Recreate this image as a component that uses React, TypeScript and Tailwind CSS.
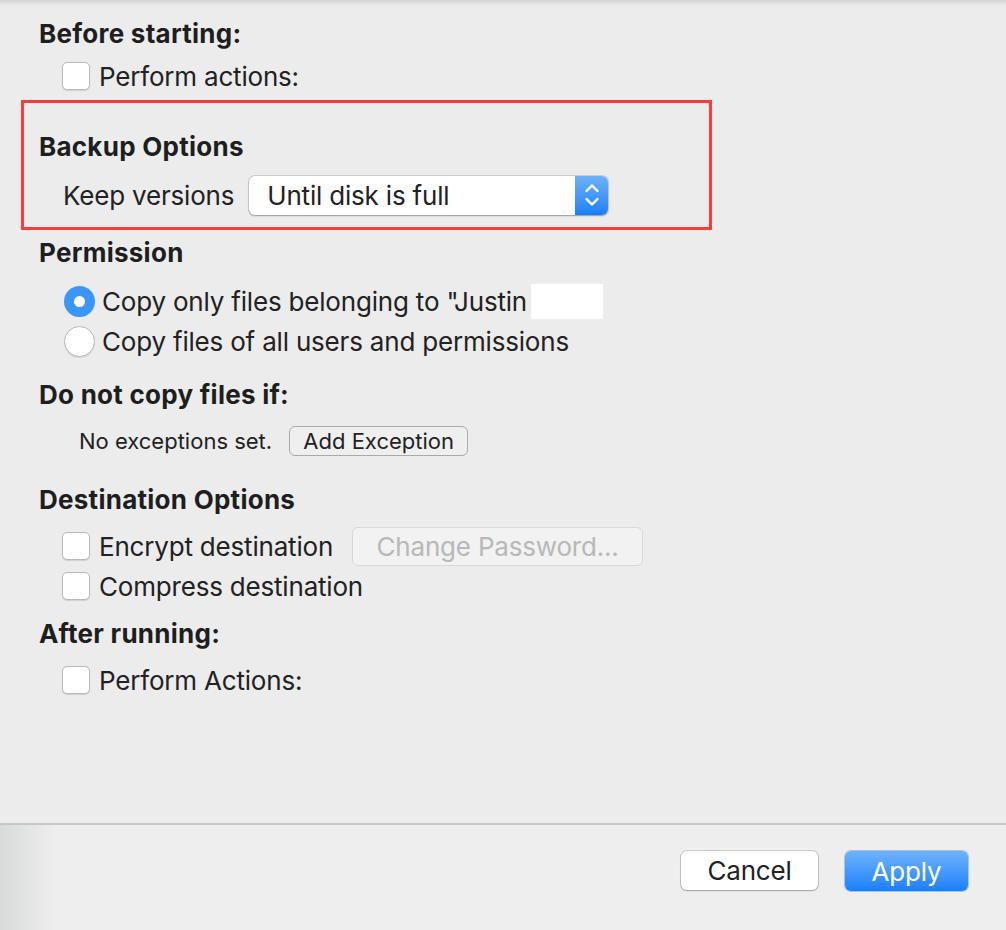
import React from 'react';

function Checkbox() {
  return (
    <span className="inline-block h-[28px] w-[28px] shrink-0 rounded-[5px] border border-[#b9b9b9] bg-white shadow-[0_1px_1px_rgba(0,0,0,0.12)]" />
  );
}

function Radio({ checked }: { checked?: boolean }) {
  if (checked) {
    return (
      <span className="flex h-[31px] w-[31px] shrink-0 items-center justify-center rounded-full bg-[#3a97f9]">
        <span className="h-[11px] w-[11px] rounded-full bg-white" />
      </span>
    );
  }
  return (
    <span className="inline-block h-[31px] w-[31px] shrink-0 rounded-full border border-[#b9b9b9] bg-white shadow-[0_1px_1px_rgba(0,0,0,0.1)]" />
  );
}

function Heading({ children, className = '' }: { children: React.ReactNode; className?: string }) {
  return (
    <div className={`flex items-center pl-[39px] text-[26px] font-bold tracking-[0.01em] text-[#1e1e1e] ${className}`}>
      {children}
    </div>
  );
}

export default function App() {
  return (
    <div className="flex h-[930px] w-[1006px] flex-col bg-[#ececec] tracking-[-0.012em] text-[#222] [font-family:Inter,'Noto_Sans',sans-serif]">
      {/* top shade */}
      <div className="h-[6px] bg-gradient-to-b from-[#d4d4d4] to-[#ececec]" />

      <Heading className="h-[54px]">Before starting:</Heading>
      <div className="flex h-[32px] items-center gap-[9px] pl-[62px] text-[26px]">
        <Checkbox />
        <span>Perform actions:</span>
      </div>

      {/* highlighted backup options */}
      <div className="ml-[21px] mt-[8px] w-[691px] border-[3px] border-[#fd3b38] pb-[12px] pt-[22px]">
        <div className="flex h-[42px] items-center pl-[15px] text-[26px] font-bold tracking-[0.01em] text-[#1e1e1e]">Backup Options</div>
        <div className="mt-[8px] flex h-[40px] items-center pl-[39px] text-[26px]">
          <span>Keep versions</span>
          <div className="ml-[15px] flex h-[39px] w-[359px] items-stretch overflow-hidden rounded-[6px] bg-white shadow-[0_0_0_1px_rgba(0,0,0,0.12),0_1px_2px_rgba(0,0,0,0.25)]">
            <span className="flex flex-1 items-center pl-[18px]">Until disk is full</span>
            <span className="flex w-[33px] items-center justify-center bg-gradient-to-b from-[#6db2fa] to-[#167ffb]">
              <svg width="16" height="28" viewBox="0 0 16 28" fill="none" stroke="white" strokeWidth="2.4" strokeLinecap="round" strokeLinejoin="round">
                <polyline points="2.5,10 8,4.5 13.5,10" />
                <polyline points="2.5,18 8,23.5 13.5,18" />
              </svg>
            </span>
          </div>
        </div>
      </div>

      <Heading className="h-[44px]">Permission</Heading>
      <div className="mt-[7px] flex h-[40px] items-center gap-[7px] pl-[64px] text-[26px]">
        <Radio checked />
        <span>Copy only files belonging to "Justin</span>
        <span className="ml-[-3px] h-[35px] w-[72px] bg-white" />
      </div>
      <div className="flex h-[40px] items-center gap-[7px] pl-[64px] text-[26px]">
        <Radio />
        <span>Copy files of all users and permissions</span>
      </div>

      <Heading className="mt-[14px] h-[38px]">Do not copy files if:</Heading>
      <div className="mt-[13px] flex h-[30px] items-center pl-[79px] text-[22px] tracking-normal">
        <span>No exceptions set.</span>
        <button className="ml-[17px] flex h-[30px] w-[179px] items-center justify-center rounded-[6px] border-[1.5px] border-[#a9a9a9] bg-[#efefef] text-[22px] text-[#222]">
          Add Exception
        </button>
      </div>

      <Heading className="mt-[24px] h-[38px]">Destination Options</Heading>
      <div className="mt-[8px] flex h-[40px] items-center pl-[62px] text-[26px]">
        <Checkbox />
        <span className="ml-[9px]">Encrypt destination</span>
        <button className="ml-[19px] flex h-[39px] w-[291px] items-center justify-center rounded-[6px] border border-[#d9d9d9] bg-[#f2f2f2] text-[26px] text-[#b8b8b8]">
          Change Password...
        </button>
      </div>
      <div className="flex h-[40px] items-center gap-[9px] pl-[62px] text-[26px]">
        <Checkbox />
        <span>Compress destination</span>
      </div>

      <Heading className="mt-[8px] h-[38px]">After running:</Heading>
      <div className="mt-[12px] flex h-[32px] items-center gap-[9px] pl-[62px] text-[26px]">
        <Checkbox />
        <span>Perform Actions:</span>
      </div>

      <div className="flex-1" />

      <div className="h-[2px] bg-[#c6c6c6]" />
      <div className="flex h-[105px] bg-[#eeeeee]">
        <div className="w-[56px] bg-gradient-to-r from-[#d9dbdb] to-[#eeeeee]" />
        <div className="flex-1" />
        <div className="flex items-start gap-[27px] pr-[38px] pt-[26px]">
          <button className="flex h-[39px] w-[137px] items-center justify-center rounded-[6px] bg-white text-[26px] text-[#222] shadow-[0_0_0_1px_rgba(0,0,0,0.15),0_1px_2px_rgba(0,0,0,0.2)]">
            Cancel
          </button>
          <button className="flex h-[40px] w-[123px] items-center justify-center rounded-[6px] bg-gradient-to-b from-[#6cb3fb] to-[#177ffb] text-[26px] text-white shadow-[0_0_0_1px_rgba(0,90,220,0.3)]">
            Apply
          </button>
        </div>
      </div>
    </div>
  );
}
